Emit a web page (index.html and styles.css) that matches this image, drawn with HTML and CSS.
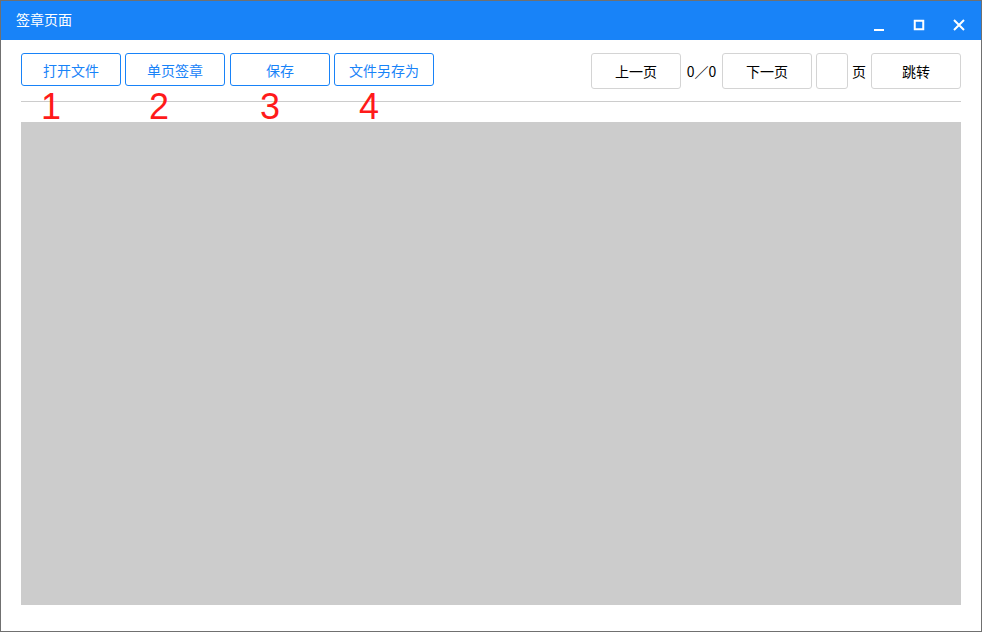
FILE: index.html
```html
<!DOCTYPE html>
<html lang="zh">
<head>
<meta charset="utf-8">
<title>签章页面</title>
<link rel="stylesheet" href="styles.css">
</head>
<body>
<div class="window">
  <div class="titlebar">
    <span class="title">签章页面</span>
    <div class="controls">
      <svg class="ctl" width="12" height="12" viewBox="0 0 12 12"><rect x="1" y="10" width="10" height="2" fill="#fff"/></svg>
      <svg class="ctl" width="12" height="12" viewBox="0 0 12 12"><rect x="1.75" y="1.75" width="8.5" height="8.5" fill="none" stroke="#fff" stroke-width="2"/></svg>
      <svg class="ctl" width="12" height="12" viewBox="0 0 12 12"><path d="M1 1 L11 11 M11 1 L1 11" stroke="#fff" stroke-width="2"/></svg>
    </div>
  </div>
  <div class="content">
    <div class="toolbar">
      <div class="left">
        <button class="btn primary">打开文件</button>
        <button class="btn primary">单页签章</button>
        <button class="btn primary">保存</button>
        <button class="btn primary">文件另存为</button>
      </div>
      <div class="right">
        <button class="btn plain">上一页</button>
        <span class="count">0／0</span>
        <button class="btn plain">下一页</button>
        <input class="page-input" type="text">
        <span class="page-label">页</span>
        <button class="btn plain">跳转</button>
      </div>
    </div>
    <div class="divider"></div>
    <div class="marks">
      <span class="mark m1">1</span>
      <span class="mark m2">2</span>
      <span class="mark m3">3</span>
      <span class="mark m4">4</span>
    </div>
    <div class="canvas"></div>
  </div>
</div>
</body>
</html>
```
FILE: styles.css
```css
* { box-sizing: border-box; }
html, body { margin: 0; padding: 0; background: #fff; }
body {
  font-family: "Noto Sans CJK SC", "Microsoft YaHei", sans-serif;
  font-size: 14px;
  color: #000;
}
.window {
  width: 982px;
  height: 632px;
  border: 1px solid #707070;
  display: flex;
  flex-direction: column;
  background: #fff;
}
.titlebar {
  height: 39px;
  background: #1883f8;
  display: flex;
  align-items: flex-start;
  justify-content: space-between;
  color: #fff;
  flex: none;
}
.title {
  margin: 7px 0 0 15px;
  font-size: 14px;
  line-height: 22px;
}
.controls {
  display: flex;
  gap: 28px;
  margin: 18px 16px 0 0;
}
.ctl { display: block; }
.content {
  position: relative;
  padding: 13px 20px 0 20px;
  flex: 1;
  display: flex;
  flex-direction: column;
}
.toolbar {
  display: flex;
  justify-content: space-between;
  align-items: flex-start;
  height: 36px;
}
.left, .right {
  display: flex;
  align-items: center;
}
.left { gap: 4px; }
.right { gap: 5px; }
.btn {
  font-family: inherit;
  font-size: 14px;
  background: #fff;
  border-radius: 3px;
  padding: 0;
  cursor: pointer;
}
.btn.primary {
  width: 100px;
  height: 33px;
  border: 1px solid #1883f8;
  color: #1883f8;
}
.left .btn:nth-child(3) { margin-left: 1px; }
.btn.plain {
  width: 90px;
  height: 36px;
  border: 1px solid #d4d4d4;
  color: #000;
}
.count {
  font-size: 14px;
  min-width: 31px;
  text-align: center;
}
.page-input {
  width: 32px;
  height: 36px;
  border: 1px solid #d4d4d4;
  border-radius: 3px;
  padding: 0;
  margin-left: -1px;
}
.page-label {
  font-size: 14px;
  margin-left: -1px;
}
.divider {
  height: 1px;
  background: #cccccc;
  margin-top: 12px;
}
.marks {
  position: absolute;
  left: 0;
  top: 49px;
  width: 100%;
}
.mark {
  position: absolute;
  color: #ff1a1a;
  font-family: "Liberation Sans", Arial, sans-serif;
  font-size: 36px;
  line-height: 36px;
}
.m1 { left: 40px; }
.m2 { left: 148px; }
.m3 { left: 259px; }
.m4 { left: 358px; }
.canvas {
  margin-top: 20px;
  height: 483px;
  background: #cccccc;
}
```
